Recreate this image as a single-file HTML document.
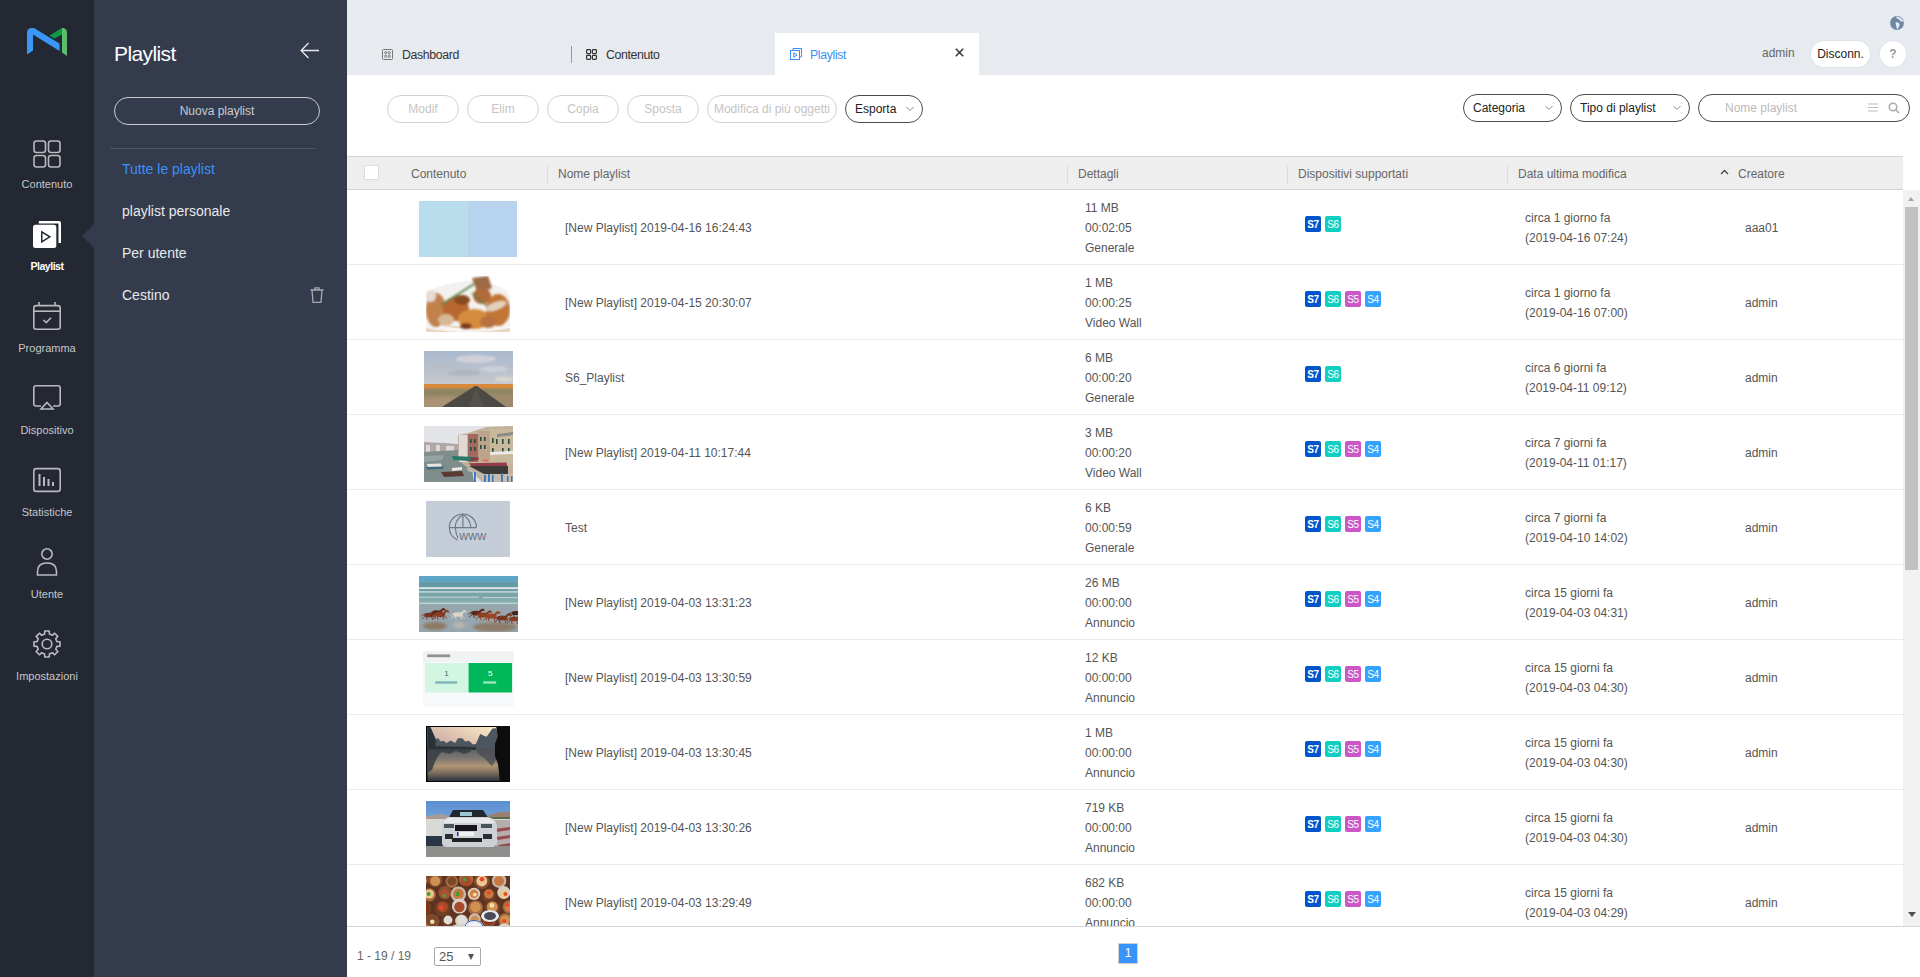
<!DOCTYPE html>
<html><head><meta charset="utf-8">
<style>
*{margin:0;padding:0;box-sizing:border-box}
html,body{width:1920px;height:977px;overflow:hidden;background:#fff;font-family:"Liberation Sans",sans-serif;position:relative}
.a{position:absolute}
#nav{left:0;top:0;width:94px;height:977px;background:#232832}
#panel{left:94px;top:0;width:253px;height:977px;background:#333b4d}
#tabbar{left:347px;top:0;width:1573px;height:75px;background:#e7eaef}
.navlbl{position:absolute;left:0;width:94px;text-align:center;font-size:11px;color:#c5c7cc;line-height:14px;white-space:nowrap}
.navicon{position:absolute;left:33px;width:28px;height:28px}
.menu{position:absolute;left:122px;font-size:14px;color:#e9e9e9;line-height:18px;white-space:nowrap}
.tab{position:absolute;top:34px;height:42px;font-size:12.3px;letter-spacing:-0.35px;color:#333;line-height:42px;white-space:nowrap}
.btn{position:absolute;top:95px;height:28px;border:1px solid #d2d2d2;border-radius:14px;font-size:12px;color:#c4c4c4;text-align:center;line-height:26px;white-space:nowrap;background:#fff}
.btnd{border-color:#4a4a4a;color:#222}
#thead{left:347px;top:156px;width:1556px;height:34px;background:#eeeeee;border-top:1px solid #d4d4d4;border-bottom:1px solid #d4d4d4}
.th{position:absolute;top:1px;line-height:32px;font-size:12px;color:#666;white-space:nowrap}
.sep{position:absolute;top:9px;height:17px;border-left:1px dotted #c8c8c8}
.row{position:absolute;left:0;width:1556px;height:75px;border-bottom:1px solid #ebebeb}
.t{position:absolute;font-size:12px;color:#555;line-height:20px;white-space:nowrap}
.bd{position:absolute;top:26px;width:16px;height:16px;border-radius:2px;color:#fff;font-size:10px;font-weight:bold;text-align:center;line-height:18px;letter-spacing:-0.3px}
.s7{background:#0055cc}.s6{background:#10cfc0;font-weight:normal}.s5{background:#cc55c8;font-weight:normal}.s4{background:#33a3ff;font-weight:normal}
.th1{position:absolute;height:56px;top:11px;overflow:hidden}
</style></head><body>
<div id="nav" class="a">
  <svg class="a" style="left:0;top:0" width="94" height="80" viewBox="0 0 94 80">
    <path d="M27 54.5 L27 33 Q27 28 32 28 L34 28 L59.5 43.5 L59.5 51 L33 34.5 L33 50.5 Z" fill="#3a97f5"/>
    <path d="M49.5 35.5 L61 28.5 L62 28.5 L62 34.5 L54.5 38.5 Z" fill="#0f9a47"/>
    <path d="M62 28 L63 28 Q67 28.5 67 33 L67 56 L62 52.5 Z" fill="#5cbd6a"/>
  </svg>
  <svg class="navicon" style="top:140px" viewBox="0 0 28 28" fill="none" stroke="#b9babd" stroke-width="1.6">
    <rect x="1" y="1" width="11.5" height="11.5" rx="2.5"/><rect x="15.5" y="1" width="11.5" height="11.5" rx="2.5"/>
    <rect x="1" y="15.5" width="11.5" height="11.5" rx="2.5"/><rect x="15.5" y="15.5" width="11.5" height="11.5" rx="2.5"/>
  </svg>
  <div class="navlbl" style="top:177px">Contenuto</div>
  <svg class="navicon" style="top:220px" viewBox="0 0 28 28">
    <path d="M5.8 1 H26 Q28 1 28 3 V23 H25.5 V3.5 H5.8 Z" fill="#fff"/>
    <rect x="0" y="4.7" width="23.3" height="23.3" rx="2.5" fill="#fff"/>
    <path d="M8.8 11.8 L16.8 16.8 L8.8 21.9 Z" fill="none" stroke="#232832" stroke-width="1.5" stroke-linejoin="miter"/>
  </svg>
  <div class="navlbl" style="top:259px;color:#fff;font-weight:bold;font-size:10.6px;letter-spacing:-0.5px">Playlist</div>
  <svg class="navicon" style="top:302px" viewBox="0 0 28 28" fill="none" stroke="#b9babd" stroke-width="1.6">
    <rect x="0.8" y="3.6" width="26.4" height="23.6" rx="2.5"/><line x1="0.8" y1="9.2" x2="27.2" y2="9.2"/>
    <line x1="6" y1="0" x2="6" y2="3.6"/><line x1="22" y1="0" x2="22" y2="3.6"/>
    <path d="M10.5 18 L13.2 20.6 L18 15.8"/>
  </svg>
  <div class="navlbl" style="top:341px">Programma</div>
  <svg class="navicon" style="top:385px" viewBox="0 0 28 28" fill="none" stroke="#b9babd" stroke-width="1.6">
    <path d="M8 21 H3 Q0.8 21 0.8 19 V3 Q0.8 0.8 3 0.8 H25 Q27.2 0.8 27.2 3 V19 Q27.2 21 25 21 H20"/>
    <path d="M14 17.5 L20 24 H8 Z"/>
  </svg>
  <div class="navlbl" style="top:423px">Dispositivo</div>
  <svg class="navicon" style="top:466px" viewBox="0 0 28 28" fill="none" stroke="#b9babd" stroke-width="1.6">
    <rect x="0.8" y="2.6" width="26.4" height="22.8" rx="2.5"/>
    <line x1="6.5" y1="8" x2="6.5" y2="20" stroke-width="2"/><line x1="11" y1="11" x2="11" y2="20" stroke-width="2"/>
    <line x1="15.5" y1="13" x2="15.5" y2="20" stroke-width="2"/><line x1="20" y1="16" x2="20" y2="20" stroke-width="2"/>
  </svg>
  <div class="navlbl" style="top:505px">Statistiche</div>
  <svg class="navicon" style="top:548px" viewBox="0 0 28 28" fill="none" stroke="#b9babd" stroke-width="1.6">
    <circle cx="14" cy="6" r="5.2"/>
    <path d="M4.5 27 V23.5 Q4.5 15 14 15 Q23.5 15 23.5 23.5 V27 Z"/>
  </svg>
  <div class="navlbl" style="top:587px">Utente</div>
  <svg class="navicon" style="top:630px" viewBox="0 0 28 28" fill="none" stroke="#b9babd" stroke-width="1.6" stroke-linejoin="round">
    <path id="gear" d="M11.58 4.09 L11.77 0.99 L16.23 0.99 L16.42 4.09 L19.29 5.28 L21.62 3.22 L24.78 6.38 L22.72 8.71 L23.91 11.58 L27.01 11.77 L27.01 16.23 L23.91 16.42 L22.72 19.29 L24.78 21.62 L21.62 24.78 L19.29 22.72 L16.42 23.91 L16.23 27.01 L11.77 27.01 L11.58 23.91 L8.71 22.72 L6.38 24.78 L3.22 21.62 L5.28 19.29 L4.09 16.42 L0.99 16.23 L0.99 11.77 L4.09 11.58 L5.28 8.71 L3.22 6.38 L6.38 3.22 L8.71 5.28 Z"/>
    <circle cx="14" cy="14" r="4.8"/>
  </svg>
  <div class="navlbl" style="top:669px">Impostazioni</div>
</div>
<div class="a" style="left:82px;top:224px;width:0;height:0;border-top:12px solid transparent;border-bottom:12px solid transparent;border-right:12px solid #333b4d"></div>
<div id="panel" class="a">
  <div class="a" style="left:20px;top:41px;font-size:21px;color:#fff;line-height:26px;letter-spacing:-0.6px">Playlist</div>
  <svg class="a" style="left:206px;top:42px" width="20" height="17" viewBox="0 0 20 17" fill="none" stroke="#e6e6e6" stroke-width="1.4">
    <path d="M19 8.5 H1.5 M8.5 1 L1.2 8.5 L8.5 16"/>
  </svg>
  <div class="a" style="left:20px;top:97px;width:206px;height:28px;border:1px solid #c9cbd0;border-radius:14px;text-align:center;line-height:26px;font-size:12px;color:#c9ccd2">Nuova playlist</div>
  <div class="a" style="left:16px;top:148px;width:206px;height:0;border-top:1px solid #4d5466"></div>
  <div class="menu" style="left:28px;top:160px;color:#3b92f5">Tutte le playlist</div>
  <div class="menu" style="left:28px;top:202px">playlist personale</div>
  <div class="menu" style="left:28px;top:244px">Per utente</div>
  <div class="menu" style="left:28px;top:286px">Cestino</div>
  <svg class="a" style="left:216px;top:287px" width="14" height="16" viewBox="0 0 14 16" fill="none" stroke="#a9abb0" stroke-width="1.3">
    <path d="M0.5 3 H13.5 M5 3 V0.8 H9 V3 M2 3 L3 15.3 H11 L12 3"/>
  </svg>
</div>
<div id="tabbar" class="a">
  <svg class="a" style="left:35px;top:49px" width="11" height="11" viewBox="0 0 11 11" fill="none" stroke="#777" stroke-width="1">
    <rect x="0.5" y="0.5" width="10" height="10" rx="1"/><circle cx="3.7" cy="3.7" r="1.1"/><circle cx="7.3" cy="3.7" r="1.1"/><circle cx="3.7" cy="7.3" r="1.1"/><circle cx="7.3" cy="7.3" r="1.1"/>
  </svg>
  <div class="tab" style="left:55px">Dashboard</div>
  <div class="a" style="left:224px;top:46px;width:1px;height:17px;background:#999"></div>
  <svg class="a" style="left:239px;top:49px" width="11" height="11" viewBox="0 0 11 11" fill="none" stroke="#333" stroke-width="1.2">
    <rect x="0.6" y="0.6" width="4" height="4" rx="0.8"/><rect x="6.4" y="0.6" width="4" height="4" rx="0.8"/><rect x="0.6" y="6.4" width="4" height="4" rx="0.8"/><rect x="6.4" y="6.4" width="4" height="4" rx="0.8"/>
  </svg>
  <div class="tab" style="left:259px">Contenuto</div>
  <div class="a" style="left:428px;top:33px;width:204px;height:42px;background:#fff"></div>
  <svg class="a" style="left:443px;top:48px" width="12" height="12" viewBox="0 0 12 12" fill="none" stroke="#3b8ff0" stroke-width="1">
    <path d="M3 2.5 V0.5 H11.5 V9 H9.5"/><rect x="0.5" y="2.5" width="9" height="9"/><path d="M3.8 4.8 L7 7 L3.8 9.2 Z"/>
  </svg>
  <div class="tab" style="left:463px;color:#3b8ff0">Playlist</div>
  <svg class="a" style="left:608px;top:48px" width="9" height="9" viewBox="0 0 9 9" stroke="#333" stroke-width="1.5"><path d="M0.8 0.8 L8.2 8.2 M8.2 0.8 L0.8 8.2"/></svg>
  <svg class="a" style="left:1543px;top:16px" width="14" height="14" viewBox="0 0 14 14">
    <circle cx="7" cy="7" r="6.9" fill="#6f87a6"/>
    <path d="M6.3 0.4 Q11.5 1.2 13.4 5.2 L11.2 5.8 Q9.4 3 6.3 2.1 Z M5.5 6.4 Q9.2 5.8 9.8 8.4 Q8.9 11 7.1 13.8 Q6.2 10 5.5 6.4 Z" fill="#e7eaef"/>
  </svg>
  <div class="a" style="left:1415px;top:45px;font-size:12px;color:#666;line-height:16px">admin</div>
  <div class="a" style="left:1464px;top:41px;width:59px;height:26px;background:#fff;border-radius:13px;font-size:12px;color:#222;text-align:center;line-height:26px;box-shadow:0 0 0 1px #dfe3ea">Disconn.</div>
  <div class="a" style="left:1533px;top:41px;width:26px;height:26px;background:#fff;border-radius:13px;font-size:12px;font-weight:bold;color:#9a9a9a;text-align:center;line-height:26px;box-shadow:0 0 0 1px #dfe3ea">?</div>
</div>
<div class="btn" style="left:387px;width:72px">Modif</div>
<div class="btn" style="left:467px;width:72px">Elim</div>
<div class="btn" style="left:547px;width:72px">Copia</div>
<div class="btn" style="left:627px;width:72px">Sposta</div>
<div class="btn" style="left:707px;width:130px">Modifica di più oggetti</div>
<div class="btn btnd" style="left:845px;width:78px;text-align:left;padding-left:9px">Esporta<svg class="a" style="left:60px;top:10px" width="8" height="6" viewBox="0 0 8 6" fill="none" stroke="#777" stroke-width="0.9"><path d="M0.5 1 L4 4.5 L7.5 1"/></svg></div>
<div class="btn btnd" style="left:1463px;width:99px;text-align:left;padding-left:9px;top:94px">Categoria<svg class="a" style="left:81px;top:10px" width="8" height="6" viewBox="0 0 8 6" fill="none" stroke="#777" stroke-width="0.9"><path d="M0.5 1 L4 4.5 L7.5 1"/></svg></div>
<div class="btn btnd" style="left:1570px;width:120px;text-align:left;padding-left:9px;top:94px">Tipo di playlist<svg class="a" style="left:102px;top:10px" width="8" height="6" viewBox="0 0 8 6" fill="none" stroke="#777" stroke-width="0.9"><path d="M0.5 1 L4 4.5 L7.5 1"/></svg></div>
<div class="btn btnd" style="left:1698px;width:212px;text-align:left;padding-left:26px;top:94px;color:#bbb">Nome playlist
  <svg class="a" style="left:169px;top:8px" width="10" height="9" viewBox="0 0 10 9" stroke="#bbb" stroke-width="1"><path d="M0 1 H10 M0 4.5 H10 M0 8 H10"/></svg>
  <svg class="a" style="left:189px;top:7px" width="12" height="12" viewBox="0 0 12 12" fill="none" stroke="#aaa" stroke-width="1.5"><circle cx="5" cy="5" r="3.8"/><path d="M7.8 7.8 L11 11"/></svg>
</div>

<div id="tbody" class="a" style="left:347px;top:190px;width:1573px;height:737px;overflow:hidden">
<div class="a" style="left:0;top:0;width:1556px;height:1000px">
<div class="row"  style="top:0px">
  <svg class="a" style="left:72px;top:11px" width="98" height="56" viewBox="0 0 98 56"><rect width="49" height="56" fill="#b9ddec"/><rect x="49" width="49" height="56" fill="#b8d3ee"/></svg>
  <div class="t" style="left:218px;top:28px">[New Playlist] 2019-04-16 16:24:43</div>
  <div class="t" style="left:738px;top:8px">11 MB<br>00:02:05<br>Generale</div>
  <div class="bd s7" style="left:958px">S7</div>
  <div class="bd s6" style="left:978px">S6</div>
  <div class="t" style="left:1178px;top:18px">circa 1 giorno fa<br>(2019-04-16 07:24)</div>
  <div class="t" style="left:1398px;top:28px">aaa01</div>
</div>
<div class="row"  style="top:75px">
  <svg class="a" style="left:79px;top:11px" width="84" height="56" viewBox="0 0 84 56"><rect width="84" height="56" fill="#fff"/>
<defs><filter id="b2" x="-10%" y="-10%" width="120%" height="120%"><feGaussianBlur stdDeviation="0.8"/></filter></defs>
<path d="M0 16 Q30 2 56 5 Q80 10 84 20 L84 56 L0 56 Z" fill="#f3f2f0"/>
<rect x="0" y="50" width="84" height="6" fill="#ead8c4"/>
<path d="M0 44 Q40 62 84 42 L84 52 Q42 60 0 52 Z" fill="#f6f5f3"/>
<g filter="url(#b2)">
<path d="M46 2 L62 0 L66 12 L52 18 Z" fill="#9c6a44"/>
<ellipse cx="10" cy="34" rx="10" ry="17" fill="#c2804c"/>
<ellipse cx="5" cy="20" rx="5" ry="6" fill="#e6dcd4"/>
<ellipse cx="30" cy="33" rx="13" ry="12" fill="#b8682e"/>
<ellipse cx="36" cy="24" rx="8" ry="5" fill="#8a4a22"/>
<ellipse cx="48" cy="43" rx="16" ry="10" fill="#d68a3c"/>
<ellipse cx="56" cy="20" rx="9" ry="8" fill="#b06a3a"/>
<ellipse cx="72" cy="34" rx="12" ry="16" fill="#c47634"/>
<ellipse cx="70" cy="30" rx="11" ry="4" fill="#e2d2bc" transform="rotate(-20 70 30)"/>
<ellipse cx="20" cy="44" rx="8" ry="6" fill="#d8b894"/>
<ellipse cx="62" cy="46" rx="8" ry="6" fill="#b87040"/>
<ellipse cx="40" cy="50" rx="6" ry="3" fill="#7a3c1c"/>
<path d="M15 29 L48 8 M46 17 L61 30" stroke="#4f7d44" stroke-width="1.6"/>
</g></svg>
  <div class="t" style="left:218px;top:28px">[New Playlist] 2019-04-15 20:30:07</div>
  <div class="t" style="left:738px;top:8px">1 MB<br>00:00:25<br>Video Wall</div>
  <div class="bd s7" style="left:958px">S7</div>
  <div class="bd s6" style="left:978px">S6</div>
  <div class="bd s5" style="left:998px">S5</div>
  <div class="bd s4" style="left:1018px">S4</div>
  <div class="t" style="left:1178px;top:18px">circa 1 giorno fa<br>(2019-04-16 07:00)</div>
  <div class="t" style="left:1398px;top:28px">admin</div>
</div>
<div class="row"  style="top:150px">
  <svg class="a" style="left:77px;top:11px" width="89" height="56" viewBox="0 0 89 56"><defs><linearGradient id="g3" x1="0" y1="0" x2="0" y2="1"><stop offset="0" stop-color="#a9b9cf"/><stop offset="0.5" stop-color="#c2c5cc"/><stop offset="1" stop-color="#d6dbe0"/></linearGradient>
<filter id="b3" x="-10%" y="-10%" width="120%" height="120%"><feGaussianBlur stdDeviation="0.9"/></filter></defs>
<rect width="89" height="56" fill="url(#g3)"/>
<g filter="url(#b3)">
<ellipse cx="52" cy="8" rx="20" ry="4" fill="#d8d6dc" opacity="0.8"/>
<ellipse cx="20" cy="14" rx="18" ry="3" fill="#b6bcc6" opacity="0.7"/>
<ellipse cx="40" cy="22" rx="16" ry="3" fill="#a8acb6" opacity="0.6"/>
<ellipse cx="70" cy="18" rx="14" ry="3" fill="#d4d6dc" opacity="0.7"/>
<ellipse cx="80" cy="28" rx="10" ry="2" fill="#e4dcd0" opacity="0.8"/>
</g>
<rect y="33" width="89" height="5" fill="#d9893a"/>
<rect y="37.5" width="89" height="18.5" fill="#9d8a6c"/>
<g filter="url(#b3)">
<path d="M0 38 L48 38 L40 44 L0 44 Z" fill="#7e8258" opacity="0.5"/>
<path d="M56 38 L89 38 L89 43 L62 43 Z" fill="#7e8458" opacity="0.5"/>
<path d="M0 48 L30 46 L20 56 L0 56 Z" fill="#b29a78" opacity="0.6"/>
</g>
<path d="M51 35 L53 35 L82 56 L18 56 Z" fill="#4c4844"/>
<path d="M45 56 L52 36 L60 56 Z" fill="#5e5a54" opacity="0.5"/></svg>
  <div class="t" style="left:218px;top:28px">S6_Playlist</div>
  <div class="t" style="left:738px;top:8px">6 MB<br>00:00:20<br>Generale</div>
  <div class="bd s7" style="left:958px">S7</div>
  <div class="bd s6" style="left:978px">S6</div>
  <div class="t" style="left:1178px;top:18px">circa 6 giorni fa<br>(2019-04-11 09:12)</div>
  <div class="t" style="left:1398px;top:28px">admin</div>
</div>
<div class="row"  style="top:225px">
  <svg class="a" style="left:77px;top:11px" width="89" height="56" viewBox="0 0 89 56"><defs><filter id="b4" x="-10%" y="-10%" width="120%" height="120%"><feGaussianBlur stdDeviation="0.55"/></filter></defs>
<rect width="89" height="56" fill="#e2e4e8"/>
<g filter="url(#b4)">
<path d="M0 16 L8 16.5 L20 17 L34 18 L34 27 L0 28 Z" fill="#b0a6a6"/>
<path d="M2 19 L6 19 L6 26 L2 26 Z M12 19 L16 19 L16 25 L12 25 Z M22 20 L30 20 L30 25 L22 25 Z" fill="#dcd8d6"/>
<path d="M0 26 L34 24 L46 30 L50 56 L0 56 Z" fill="#7f8e8c"/>
<path d="M0 30 L20 29 L18 34 L0 36 Z" fill="#95a3a2"/>
<path d="M34 9 L44 7 L62 1 L89 0 L89 56 L58 56 L44 42 L34 34 Z" fill="#c4b29a"/>
<rect x="35" y="9" width="8" height="27" fill="#dedad6"/>
<rect x="44" y="8" width="10" height="28" fill="#a26a5e"/>
<rect x="54" y="5" width="12" height="30" fill="#bca48a"/>
<rect x="66" y="3" width="23" height="36" fill="#c9b99c"/>
<path d="M73 8 L89 6 L89 9 L73 11 Z" fill="#8a8a88"/>
<g fill="#2c4a3e"><rect x="46" y="13" width="1.6" height="4"/><rect x="50" y="13" width="1.6" height="4"/><rect x="56" y="11" width="1.6" height="4"/><rect x="60" y="11" width="1.6" height="4"/><rect x="56" y="19" width="1.6" height="4"/><rect x="60" y="19" width="1.6" height="4"/><rect x="46" y="21" width="1.6" height="4"/><rect x="50" y="21" width="1.6" height="4"/><rect x="68" y="12" width="1.6" height="5"/><rect x="72" y="13" width="1.6" height="5"/><rect x="78" y="13" width="1.6" height="5"/><rect x="84" y="13" width="1.6" height="5"/><rect x="68" y="22" width="1.6" height="5"/><rect x="78" y="22" width="1.6" height="5"/><rect x="84" y="22" width="1.6" height="5"/></g>
<path d="M66 26 L89 25 L89 28 L66 29 Z" fill="#eceae6"/>
<path d="M28 30 L51 31 L49 35.3 L29.3 34 Z" fill="#2a7a68"/>
<path d="M46.6 32 L54.5 31.3 L54.5 34 L46.6 35 Z" fill="#903048"/>
<path d="M59 33 L65 33.5 L64 36 L58 35.5 Z" fill="#d88060"/>
<path d="M44.6 37.2 L82.5 36.6 L83.2 40.6 L72.5 42.6 L47.9 40.6 Z" fill="#923a4c"/>
<path d="M45 40 L84 40 L84 48 L60 48 Z" fill="#3c3a38"/>
<path d="M42.6 41.9 L59.2 48.6 L60 51 L44 45 Z" fill="#b8b8b4"/>
<path d="M3 38 L17 37.5 L18 41.5 L4 42 Z" fill="#e6e6e0"/>
<path d="M2 41 L20 40.5 L19 43 L3 43.5 Z" fill="#3f6a78"/>
<path d="M17 46 L38 45 L40 50 L20 51 Z" fill="#5c3a30"/>
<path d="M28 42 L38 41 L38 44 L28 45 Z" fill="#eaeae4"/>
<rect x="58" y="48" width="31" height="8" fill="#c4bcb4"/>
<g fill="#3a74b4"><rect x="50" y="46" width="1.8" height="10"/><rect x="60" y="49" width="1.8" height="7"/><rect x="64" y="48" width="1.8" height="8"/><rect x="68" y="49" width="1.5" height="7"/><rect x="77" y="47" width="1.8" height="9"/><rect x="83" y="50" width="1.5" height="6"/><rect x="87" y="50" width="1.5" height="6"/></g>
</g></svg>
  <div class="t" style="left:218px;top:28px">[New Playlist] 2019-04-11 10:17:44</div>
  <div class="t" style="left:738px;top:8px">3 MB<br>00:00:20<br>Video Wall</div>
  <div class="bd s7" style="left:958px">S7</div>
  <div class="bd s6" style="left:978px">S6</div>
  <div class="bd s5" style="left:998px">S5</div>
  <div class="bd s4" style="left:1018px">S4</div>
  <div class="t" style="left:1178px;top:18px">circa 7 giorni fa<br>(2019-04-11 01:17)</div>
  <div class="t" style="left:1398px;top:28px">admin</div>
</div>
<div class="row"  style="top:300px">
  <svg class="a" style="left:79px;top:11px" width="84" height="56" viewBox="0 0 84 56"><rect width="84" height="56" fill="#c5cdd8"/>
<g fill="none" stroke="#6e7887" stroke-width="1.15">
<path d="M23.3 26.6 A13.6 13.6 0 0 1 50.5 26.6"/>
<path d="M23.3 26.6 A13.6 13.6 0 0 0 31.5 39"/>
<path d="M23.3 26.6 H50.5 M36.9 13.3 V26.6"/>
<path d="M36.9 13.3 Q28 20 29.5 28 Q30 33 32 37"/>
<path d="M36.9 13.3 Q44 18 45 26.6"/>
</g>
<text x="33.3" y="38.9" font-family="Liberation Sans" font-size="12.5" fill="#6e7887" textLength="27" lengthAdjust="spacingAndGlyphs">www</text></svg>
  <div class="t" style="left:218px;top:28px">Test</div>
  <div class="t" style="left:738px;top:8px">6 KB<br>00:00:59<br>Generale</div>
  <div class="bd s7" style="left:958px">S7</div>
  <div class="bd s6" style="left:978px">S6</div>
  <div class="bd s5" style="left:998px">S5</div>
  <div class="bd s4" style="left:1018px">S4</div>
  <div class="t" style="left:1178px;top:18px">circa 7 giorni fa<br>(2019-04-10 14:02)</div>
  <div class="t" style="left:1398px;top:28px">admin</div>
</div>
<div class="row"  style="top:375px">
  <svg class="a" style="left:72px;top:11px" width="99" height="56" viewBox="0 0 99 56"><defs><linearGradient id="g6" x1="0" y1="0" x2="0" y2="1"><stop offset="0" stop-color="#5f97a0"/><stop offset="1" stop-color="#8eb0b0"/></linearGradient>
<filter id="b6" x="-10%" y="-10%" width="120%" height="120%"><feGaussianBlur stdDeviation="0.5"/></filter>
<filter id="b6b" x="-20%" y="-50%" width="140%" height="200%"><feGaussianBlur stdDeviation="1.5"/></filter></defs>
<rect width="99" height="56" fill="#96a6ae"/>
<rect width="99" height="6.5" fill="#5fa6c6"/>
<rect y="6.5" width="99" height="22" fill="url(#g6)"/>
<g filter="url(#b6)">
<rect y="11.2" width="99" height="1.8" fill="#eef2f0" opacity="0.85"/>
<rect y="15.2" width="99" height="1.4" fill="#e8eeec" opacity="0.75"/>
<rect y="20.6" width="60" height="1.2" fill="#e0e8e6" opacity="0.6"/>
<rect x="64" y="21" width="35" height="1.2" fill="#e0e8e6" opacity="0.6"/>
<rect y="26.6" width="99" height="1.4" fill="#e0e6e4" opacity="0.6"/>
</g>
<g filter="url(#b6b)">
<ellipse cx="16" cy="50" rx="12" ry="4" fill="#8a6a48" opacity="0.75"/>
<ellipse cx="40" cy="49" rx="6" ry="3" fill="#c8c0b0" opacity="0.7"/>
<ellipse cx="76" cy="51" rx="22" ry="4.5" fill="#8a6a48" opacity="0.7"/>
</g>
<g filter="url(#b6)">
<g transform="translate(10 39) scale(1.0)" fill="#7a3420" stroke="#7a3420">
<ellipse cx="0" cy="0" rx="5" ry="2.3" stroke="none"/>
<path d="M3 -0.8 L6.2 -3.6" stroke-width="2" fill="none"/>
<ellipse cx="7" cy="-3.2" rx="1.7" ry="1" stroke="none" transform="rotate(25 7 -3.2)"/>
<path d="M-4.8 -0.8 L-7.5 1.2 M3.6 1.2 L6.8 3.8 M2.6 1.4 L3.6 5 M-3.6 1.2 L-6.8 4 M-2.6 1.4 L-1.8 5" stroke-width="0.9" fill="none"/>
</g>
<g transform="translate(18 36.5) scale(1.0)" fill="#5e2818" stroke="#5e2818">
<ellipse cx="0" cy="0" rx="5" ry="2.3" stroke="none"/>
<path d="M3 -0.8 L6.2 -3.6" stroke-width="2" fill="none"/>
<ellipse cx="7" cy="-3.2" rx="1.7" ry="1" stroke="none" transform="rotate(25 7 -3.2)"/>
<path d="M-4.8 -0.8 L-7.5 1.2 M3.6 1.2 L6.8 3.8 M2.6 1.4 L3.6 5 M-3.6 1.2 L-6.8 4 M-2.6 1.4 L-1.8 5" stroke-width="0.9" fill="none"/>
</g>
<g transform="translate(21 38.5) scale(1.05)" fill="#8a3c22" stroke="#8a3c22">
<ellipse cx="0" cy="0" rx="5" ry="2.3" stroke="none"/>
<path d="M3 -0.8 L6.2 -3.6" stroke-width="2" fill="none"/>
<ellipse cx="7" cy="-3.2" rx="1.7" ry="1" stroke="none" transform="rotate(25 7 -3.2)"/>
<path d="M-4.8 -0.8 L-7.5 1.2 M3.6 1.2 L6.8 3.8 M2.6 1.4 L3.6 5 M-3.6 1.2 L-6.8 4 M-2.6 1.4 L-1.8 5" stroke-width="0.9" fill="none"/>
</g>
<g transform="translate(39 38.5) scale(1.0)" fill="#dcd6cc" stroke="#dcd6cc">
<ellipse cx="0" cy="0" rx="5" ry="2.3" stroke="none"/>
<path d="M3 -0.8 L6.2 -3.6" stroke-width="2" fill="none"/>
<ellipse cx="7" cy="-3.2" rx="1.7" ry="1" stroke="none" transform="rotate(25 7 -3.2)"/>
<path d="M-4.8 -0.8 L-7.5 1.2 M3.6 1.2 L6.8 3.8 M2.6 1.4 L3.6 5 M-3.6 1.2 L-6.8 4 M-2.6 1.4 L-1.8 5" stroke-width="0.9" fill="none"/>
</g>
<g transform="translate(57 37) scale(1.0)" fill="#5a2a1c" stroke="#5a2a1c">
<ellipse cx="0" cy="0" rx="5" ry="2.3" stroke="none"/>
<path d="M3 -0.8 L6.2 -3.6" stroke-width="2" fill="none"/>
<ellipse cx="7" cy="-3.2" rx="1.7" ry="1" stroke="none" transform="rotate(25 7 -3.2)"/>
<path d="M-4.8 -0.8 L-7.5 1.2 M3.6 1.2 L6.8 3.8 M2.6 1.4 L3.6 5 M-3.6 1.2 L-6.8 4 M-2.6 1.4 L-1.8 5" stroke-width="0.9" fill="none"/>
</g>
<g transform="translate(64 39) scale(1.05)" fill="#8c3e22" stroke="#8c3e22">
<ellipse cx="0" cy="0" rx="5" ry="2.3" stroke="none"/>
<path d="M3 -0.8 L6.2 -3.6" stroke-width="2" fill="none"/>
<ellipse cx="7" cy="-3.2" rx="1.7" ry="1" stroke="none" transform="rotate(25 7 -3.2)"/>
<path d="M-4.8 -0.8 L-7.5 1.2 M3.6 1.2 L6.8 3.8 M2.6 1.4 L3.6 5 M-3.6 1.2 L-6.8 4 M-2.6 1.4 L-1.8 5" stroke-width="0.9" fill="none"/>
</g>
<g transform="translate(72 40) scale(1.1)" fill="#9a4626" stroke="#9a4626">
<ellipse cx="0" cy="0" rx="5" ry="2.3" stroke="none"/>
<path d="M3 -0.8 L6.2 -3.6" stroke-width="2" fill="none"/>
<ellipse cx="7" cy="-3.2" rx="1.7" ry="1" stroke="none" transform="rotate(25 7 -3.2)"/>
<path d="M-4.8 -0.8 L-7.5 1.2 M3.6 1.2 L6.8 3.8 M2.6 1.4 L3.6 5 M-3.6 1.2 L-6.8 4 M-2.6 1.4 L-1.8 5" stroke-width="0.9" fill="none"/>
</g>
<g transform="translate(83 42) scale(1.1)" fill="#7a3420" stroke="#7a3420">
<ellipse cx="0" cy="0" rx="5" ry="2.3" stroke="none"/>
<path d="M3 -0.8 L6.2 -3.6" stroke-width="2" fill="none"/>
<ellipse cx="7" cy="-3.2" rx="1.7" ry="1" stroke="none" transform="rotate(25 7 -3.2)"/>
<path d="M-4.8 -0.8 L-7.5 1.2 M3.6 1.2 L6.8 3.8 M2.6 1.4 L3.6 5 M-3.6 1.2 L-6.8 4 M-2.6 1.4 L-1.8 5" stroke-width="0.9" fill="none"/>
</g>
<g transform="translate(95 43) scale(1.0)" fill="#8a3a20" stroke="#8a3a20">
<ellipse cx="0" cy="0" rx="5" ry="2.3" stroke="none"/>
<path d="M3 -0.8 L6.2 -3.6" stroke-width="2" fill="none"/>
<ellipse cx="7" cy="-3.2" rx="1.7" ry="1" stroke="none" transform="rotate(25 7 -3.2)"/>
<path d="M-4.8 -0.8 L-7.5 1.2 M3.6 1.2 L6.8 3.8 M2.6 1.4 L3.6 5 M-3.6 1.2 L-6.8 4 M-2.6 1.4 L-1.8 5" stroke-width="0.9" fill="none"/>
</g>
<g transform="translate(97 37) scale(0.9)" fill="#4a2418" stroke="#4a2418">
<ellipse cx="0" cy="0" rx="5" ry="2.3" stroke="none"/>
<path d="M3 -0.8 L6.2 -3.6" stroke-width="2" fill="none"/>
<ellipse cx="7" cy="-3.2" rx="1.7" ry="1" stroke="none" transform="rotate(25 7 -3.2)"/>
<path d="M-4.8 -0.8 L-7.5 1.2 M3.6 1.2 L6.8 3.8 M2.6 1.4 L3.6 5 M-3.6 1.2 L-6.8 4 M-2.6 1.4 L-1.8 5" stroke-width="0.9" fill="none"/>
</g>
</g></svg>
  <div class="t" style="left:218px;top:28px">[New Playlist] 2019-04-03 13:31:23</div>
  <div class="t" style="left:738px;top:8px">26 MB<br>00:00:00<br>Annuncio</div>
  <div class="bd s7" style="left:958px">S7</div>
  <div class="bd s6" style="left:978px">S6</div>
  <div class="bd s5" style="left:998px">S5</div>
  <div class="bd s4" style="left:1018px">S4</div>
  <div class="t" style="left:1178px;top:18px">circa 15 giorni fa<br>(2019-04-03 04:31)</div>
  <div class="t" style="left:1398px;top:28px">admin</div>
</div>
<div class="row"  style="top:450px">
  <svg class="a" style="left:76px;top:11px" width="91" height="56" viewBox="0 0 91 56"><rect width="91" height="56" fill="#f8f9fb"/><rect width="91" height="11" fill="#f1f2f4"/>
<rect x="4.2" y="3.4" width="23" height="2.8" fill="#444" opacity="0.55"/>
<rect x="2" y="12" width="44" height="29.5" fill="#d2f6e2"/><rect x="45.6" y="12" width="43.5" height="29.5" fill="#00b85a"/>
<text x="23.5" y="24.8" font-family="Liberation Sans" font-size="8" fill="#1f6f84" text-anchor="middle">1</text>
<text x="67.3" y="24.8" font-family="Liberation Sans" font-size="8" fill="#fff" text-anchor="middle">5</text>
<rect x="12.2" y="30.3" width="22" height="2.4" fill="#3a7f96" opacity="0.55"/><rect x="60.2" y="30.3" width="13" height="2.4" fill="#fff" opacity="0.6"/></svg>
  <div class="t" style="left:218px;top:28px">[New Playlist] 2019-04-03 13:30:59</div>
  <div class="t" style="left:738px;top:8px">12 KB<br>00:00:00<br>Annuncio</div>
  <div class="bd s7" style="left:958px">S7</div>
  <div class="bd s6" style="left:978px">S6</div>
  <div class="bd s5" style="left:998px">S5</div>
  <div class="bd s4" style="left:1018px">S4</div>
  <div class="t" style="left:1178px;top:18px">circa 15 giorni fa<br>(2019-04-03 04:30)</div>
  <div class="t" style="left:1398px;top:28px">admin</div>
</div>
<div class="row"  style="top:525px">
  <svg class="a" style="left:79px;top:11px" width="84" height="56" viewBox="0 0 84 56"><defs><linearGradient id="g8s" x1="0" y1="0.6" x2="1" y2="0"><stop offset="0" stop-color="#c9aaa4"/><stop offset="0.55" stop-color="#e8d0b8"/><stop offset="1" stop-color="#fbf3c6"/></linearGradient>
<linearGradient id="g8w" x1="0" y1="0" x2="0" y2="1"><stop offset="0" stop-color="#5c6064"/><stop offset="0.3" stop-color="#7a7670"/><stop offset="0.55" stop-color="#b09474"/><stop offset="0.8" stop-color="#6e6458"/><stop offset="1" stop-color="#283040"/></linearGradient>
<filter id="b8" x="-10%" y="-10%" width="120%" height="120%"><feGaussianBlur stdDeviation="0.6"/></filter></defs>
<rect width="84" height="56" fill="#050505"/>
<rect x="1.5" y="1" width="75" height="22" fill="url(#g8s)"/>
<rect x="1.5" y="22" width="75" height="33" fill="url(#g8w)"/>
<g filter="url(#b8)">
<path d="M1.5 1 L4.4 1.2 L9.8 13.4 L11.9 11.9 L14.8 15.5 L17.7 14.8 L20.5 17 L24.8 14.4 L29.1 17 L32 12.3 L36.3 12.3 L39.2 15.5 L42.8 14.8 L47 18.4 L50 17.7 L54.2 8 L57.8 9.8 L60.7 10.8 L66.4 2.6 L70 2.2 L72.2 6.9 L76.5 1 L76.5 24 L1.5 24 Z" fill="#4e565e"/>
<path d="M1.5 1 L4.4 1.2 L9.8 13.4 L9 24 L1.5 24 Z" fill="#2a3038"/>
<path d="M1.5 20 L50 21 L50 24 L1.5 24 Z" fill="#2e3236"/>
<path d="M2 23 L46 23 L44 26 L38 28 L30 25 L24 28 L16 26 L12 30 L9 36 L6 44 L1.5 47 Z" fill="#3a4048" opacity="0.9"/>
<path d="M50 23 L72 23 L70 34 L66 40 L62 36 L58 32 L52 28 Z" fill="#4a4e52" opacity="0.8"/>
<path d="M70 0 L84 0 L84 56 L74 56 L73 46 L72 38 L69 30 L69 18 L72 10 Z" fill="#080808"/>
</g></svg>
  <div class="t" style="left:218px;top:28px">[New Playlist] 2019-04-03 13:30:45</div>
  <div class="t" style="left:738px;top:8px">1 MB<br>00:00:00<br>Annuncio</div>
  <div class="bd s7" style="left:958px">S7</div>
  <div class="bd s6" style="left:978px">S6</div>
  <div class="bd s5" style="left:998px">S5</div>
  <div class="bd s4" style="left:1018px">S4</div>
  <div class="t" style="left:1178px;top:18px">circa 15 giorni fa<br>(2019-04-03 04:30)</div>
  <div class="t" style="left:1398px;top:28px">admin</div>
</div>
<div class="row"  style="top:600px">
  <svg class="a" style="left:79px;top:11px" width="84" height="56" viewBox="0 0 84 56"><defs><linearGradient id="g9" x1="0" y1="0" x2="0" y2="1"><stop offset="0" stop-color="#5a8ed2"/><stop offset="1" stop-color="#a2c4e6"/></linearGradient>
<filter id="b9" x="-10%" y="-10%" width="120%" height="120%"><feGaussianBlur stdDeviation="0.5"/></filter></defs>
<rect width="84" height="56" fill="url(#g9)"/>
<g filter="url(#b9)">
<path d="M0 15 L8 14 L16 13 L26 16 L26 19 L0 19 Z" fill="#a89c94"/>
<path d="M58 16 L66 13 L74 11 L84 11 L84 19 L58 19 Z" fill="#9a8070"/>
<rect x="62" y="16" width="22" height="3" fill="#5a6c44"/>
<rect y="18" width="84" height="27" fill="#d9d9d6"/>
<path d="M60 19 L84 19 L84 50 L68 50 Z" fill="#b4aeae"/>
<path d="M68 28 L84 26 L84 29 L70 31 Z M70 36 L84 34 L84 37 L72 39 Z M72 44 L84 42 L84 45 L74 47 Z" fill="#9a4a50"/>
<path d="M0 35 L70 35 L70 47 L0 47 Z" fill="#2c3444"/>
<rect y="45" width="84" height="11" fill="#8e8e8c"/>
<path d="M27 9 L57 9 L62 16.5 L23 16.5 Z" fill="#20262e"/>
<rect x="34" y="11" width="12" height="4" fill="#9cc6cf"/>
<path d="M23 16 L62 16 Q70 18 71 24 L71 42 Q70 46 66 46 L21 46 Q16 46 16 42 L16 24 Q17 18 23 16 Z" fill="#cdd0d4"/>
<path d="M22 17 L63 17 Q68 19 68 22 L18 22 Q18 19 22 17 Z" fill="#e6e8ec"/>
<rect x="18" y="23" width="10" height="4" fill="#4a525a"/><rect x="55" y="23" width="11" height="4" fill="#4a525a"/>
<rect x="29" y="24" width="22" height="6" fill="#15181c"/>
<rect x="31" y="31" width="17" height="4" fill="#f2f2f2"/><rect x="31" y="31" width="1.6" height="4" fill="#2040a0"/>
<rect x="26" y="37" width="30" height="4" fill="#1f2226"/>
<rect x="19" y="33" width="8" height="5" fill="#2a2d31"/><rect x="57" y="33" width="9" height="5" fill="#2a2d31"/>
</g></svg>
  <div class="t" style="left:218px;top:28px">[New Playlist] 2019-04-03 13:30:26</div>
  <div class="t" style="left:738px;top:8px">719 KB<br>00:00:00<br>Annuncio</div>
  <div class="bd s7" style="left:958px">S7</div>
  <div class="bd s6" style="left:978px">S6</div>
  <div class="bd s5" style="left:998px">S5</div>
  <div class="bd s4" style="left:1018px">S4</div>
  <div class="t" style="left:1178px;top:18px">circa 15 giorni fa<br>(2019-04-03 04:30)</div>
  <div class="t" style="left:1398px;top:28px">admin</div>
</div>
<div class="row"  style="top:675px">
  <svg class="a" style="left:79px;top:11px" width="84" height="56" viewBox="0 0 84 56"><defs><filter id="b10" x="-10%" y="-10%" width="120%" height="120%"><feGaussianBlur stdDeviation="0.45"/></filter></defs>
<rect width="84" height="56" fill="#5e3420"/>
<g filter="url(#b10)">
<circle cx="-3.7" cy="3.3" r="6.4" fill="#8a5030"/>
<circle cx="-3.7" cy="5.0" r="4.5" fill="#d09050"/>
<circle cx="-3.4" cy="6.6" r="1.9" fill="#e84a2a"/>
<circle cx="9.2" cy="4.0" r="7.1" fill="#8a5030"/>
<circle cx="9.2" cy="5.0" r="5.0" fill="#d09050"/>
<circle cx="25.8" cy="5.5" r="6.3" fill="#a86840"/>
<circle cx="25.8" cy="5.0" r="4.4" fill="#7a4a2a"/>
<circle cx="40.2" cy="3.2" r="7.0" fill="#a86840"/>
<circle cx="40.2" cy="5.0" r="4.9" fill="#a8482a"/>
<circle cx="38.7" cy="3.5" r="2.1" fill="#4a9a3a"/>
<circle cx="55.8" cy="5.3" r="7.7" fill="#8a5030"/>
<circle cx="55.8" cy="5.0" r="5.4" fill="#e8c890"/>
<circle cx="56.0" cy="3.3" r="2.3" fill="#e84a2a"/>
<circle cx="73.1" cy="4.7" r="7.2" fill="#c8b8a8"/>
<circle cx="73.1" cy="5.0" r="5.1" fill="#c87840"/>
<circle cx="3.4" cy="18.8" r="6.6" fill="#a86840"/>
<circle cx="3.4" cy="18.0" r="4.6" fill="#e8c890"/>
<circle cx="2.6" cy="18.0" r="2.0" fill="#4a9a3a"/>
<circle cx="18.9" cy="16.5" r="6.7" fill="#8a5030"/>
<circle cx="18.9" cy="18.0" r="4.7" fill="#b05030"/>
<circle cx="18.2" cy="19.7" r="2.0" fill="#4a9a3a"/>
<circle cx="32.4" cy="18.3" r="7.7" fill="#c8b8a8"/>
<circle cx="32.4" cy="18.0" r="5.4" fill="#c87840"/>
<circle cx="31.8" cy="18.0" r="2.3" fill="#4a9a3a"/>
<circle cx="48.0" cy="17.9" r="6.2" fill="#d8d0c8"/>
<circle cx="48.0" cy="18.0" r="4.4" fill="#d88040"/>
<circle cx="48.8" cy="18.6" r="1.9" fill="#f0e0b0"/>
<circle cx="62.9" cy="19.5" r="6.7" fill="#704028"/>
<circle cx="62.9" cy="18.0" r="4.7" fill="#c87840"/>
<circle cx="62.8" cy="16.7" r="2.0" fill="#e84a2a"/>
<circle cx="77.8" cy="16.5" r="6.5" fill="#d8d0c8"/>
<circle cx="77.8" cy="18.0" r="4.6" fill="#e8c890"/>
<circle cx="79.5" cy="18.0" r="2.0" fill="#e84a2a"/>
<circle cx="-2.8" cy="32.5" r="8.2" fill="#704028"/>
<circle cx="-2.8" cy="31.0" r="5.7" fill="#8a3018"/>
<circle cx="16.6" cy="32.8" r="7.7" fill="#704028"/>
<circle cx="16.6" cy="31.0" r="5.4" fill="#a8482a"/>
<circle cx="15.2" cy="31.6" r="2.3" fill="#e84a2a"/>
<circle cx="33.4" cy="30.1" r="7.5" fill="#d8d0c8"/>
<circle cx="33.4" cy="31.0" r="5.2" fill="#a8482a"/>
<circle cx="49.5" cy="31.8" r="7.4" fill="#a86840"/>
<circle cx="49.5" cy="31.0" r="5.2" fill="#d09050"/>
<circle cx="66.3" cy="32.6" r="7.8" fill="#704028"/>
<circle cx="66.3" cy="31.0" r="5.5" fill="#d09050"/>
<circle cx="65.9" cy="29.4" r="2.4" fill="#f0e0b0"/>
<circle cx="83.2" cy="30.8" r="6.5" fill="#a86840"/>
<circle cx="83.2" cy="31.0" r="4.5" fill="#d88040"/>
<circle cx="81.4" cy="29.0" r="1.9" fill="#e84a2a"/>
<circle cx="5.8" cy="45.5" r="7.5" fill="#8a5030"/>
<circle cx="5.8" cy="44.0" r="5.3" fill="#7a4a2a"/>
<circle cx="6.3" cy="45.8" r="2.3" fill="#f0e0b0"/>
<circle cx="22.0" cy="46.0" r="6.3" fill="#704028"/>
<circle cx="22.0" cy="44.0" r="4.4" fill="#e0e0d8"/>
<circle cx="35.5" cy="45.0" r="6.4" fill="#d8d0c8"/>
<circle cx="35.5" cy="44.0" r="4.5" fill="#e0e0d8"/>
<circle cx="48.7" cy="43.4" r="6.1" fill="#c8b8a8"/>
<circle cx="48.7" cy="44.0" r="4.2" fill="#d09050"/>
<circle cx="63.1" cy="44.8" r="6.7" fill="#8a5030"/>
<circle cx="63.1" cy="44.0" r="4.7" fill="#8a3018"/>
<circle cx="79.3" cy="44.1" r="6.9" fill="#a86840"/>
<circle cx="79.3" cy="44.0" r="4.8" fill="#d09050"/>
<circle cx="78.2" cy="45.2" r="2.1" fill="#e84a2a"/>
<circle cx="-1.7" cy="55.8" r="7.8" fill="#a86840"/>
<circle cx="-1.7" cy="57.0" r="5.5" fill="#e0e0d8"/>
<circle cx="-3.6" cy="55.1" r="2.4" fill="#4a9a3a"/>
<circle cx="15.4" cy="58.8" r="6.5" fill="#c8b8a8"/>
<circle cx="15.4" cy="57.0" r="4.5" fill="#e0e0d8"/>
<circle cx="30.5" cy="55.3" r="6.9" fill="#d8d0c8"/>
<circle cx="30.5" cy="57.0" r="4.8" fill="#d88040"/>
<circle cx="29.3" cy="55.8" r="2.1" fill="#f0e0b0"/>
<circle cx="47.2" cy="56.9" r="7.5" fill="#8a5030"/>
<circle cx="47.2" cy="57.0" r="5.3" fill="#c87840"/>
<circle cx="62.5" cy="58.1" r="7.7" fill="#704028"/>
<circle cx="62.5" cy="57.0" r="5.4" fill="#e8c890"/>
<circle cx="78.4" cy="55.3" r="8.0" fill="#d8d0c8"/>
<circle cx="78.4" cy="57.0" r="5.6" fill="#b05030"/>
<ellipse cx="48" cy="51" rx="10" ry="7" fill="#e8eef8"/><ellipse cx="48" cy="51" rx="6" ry="4" fill="#f4f4f0"/><ellipse cx="48" cy="51" rx="9" ry="6.5" fill="none" stroke="#3a5aa8" stroke-width="1"/>
<ellipse cx="64" cy="40" rx="9" ry="6" fill="#e6eaf0"/><ellipse cx="64" cy="40" rx="6" ry="4" fill="#4a4a58"/>
</g></svg>
  <div class="t" style="left:218px;top:28px">[New Playlist] 2019-04-03 13:29:49</div>
  <div class="t" style="left:738px;top:8px">682 KB<br>00:00:00<br>Annuncio</div>
  <div class="bd s7" style="left:958px">S7</div>
  <div class="bd s6" style="left:978px">S6</div>
  <div class="bd s5" style="left:998px">S5</div>
  <div class="bd s4" style="left:1018px">S4</div>
  <div class="t" style="left:1178px;top:18px">circa 15 giorni fa<br>(2019-04-03 04:29)</div>
  <div class="t" style="left:1398px;top:28px">admin</div>
</div>
</div></div>
<div id="thead" class="a">
  <div class="a" style="left:17px;top:8px;width:15px;height:15px;background:#fff;border:1px solid #dcdcdc;border-radius:1px"></div>
  <div class="th" style="left:64px">Contenuto</div>
  <div class="sep" style="left:200px"></div>
  <div class="th" style="left:211px">Nome playlist</div>
  <div class="sep" style="left:720px"></div>
  <div class="th" style="left:731px">Dettagli</div>
  <div class="sep" style="left:940px"></div>
  <div class="th" style="left:951px">Dispositivi supportati</div>
  <div class="sep" style="left:1160px"></div>
  <div class="th" style="left:1171px">Data ultima modifica</div>
  <svg class="a" style="left:1373px;top:12px" width="9" height="6" viewBox="0 0 9 6" fill="none" stroke="#444" stroke-width="1.3"><path d="M1 5 L4.5 1.5 L8 5"/></svg>
  <div class="th" style="left:1391px">Creatore</div>
</div>
<div id="sb" class="a" style="left:1903px;top:190px;width:17px;height:737px;background:#f1f1f1">
  <div class="a" style="left:5px;top:7px;width:0;height:0;border-left:3.5px solid transparent;border-right:3.5px solid transparent;border-bottom:4px solid #a3a3a3"></div>
  <div class="a" style="left:2px;top:17px;width:13px;height:363px;background:#c1c1c1"></div>
  <div class="a" style="left:4.5px;top:722px;width:0;height:0;border-left:4px solid transparent;border-right:4px solid transparent;border-top:5px solid #505050"></div>
</div>
<div class="a" style="left:347px;top:926px;width:1573px;height:1px;background:#d6d6d6"></div>
<div class="a" style="left:357px;top:948px;font-size:12px;color:#666;line-height:16px">1 - 19 / 19</div>
<div class="a" style="left:434px;top:947px;width:47px;height:19px;border:1px solid #a9a9a9;border-radius:2px;font-size:13px;color:#555;line-height:17px;padding-left:4px">25
  <div class="a" style="left:33px;top:6px;width:0;height:0;border-left:3.5px solid transparent;border-right:3.5px solid transparent;border-top:6px solid #555"></div>
</div>
<div class="a" style="left:1118px;top:943px;width:20px;height:21px;background:#3894fb;border:1px solid #d8d0c8;color:#fff;font-size:12px;text-align:center;line-height:19px">1</div>
</body></html>
